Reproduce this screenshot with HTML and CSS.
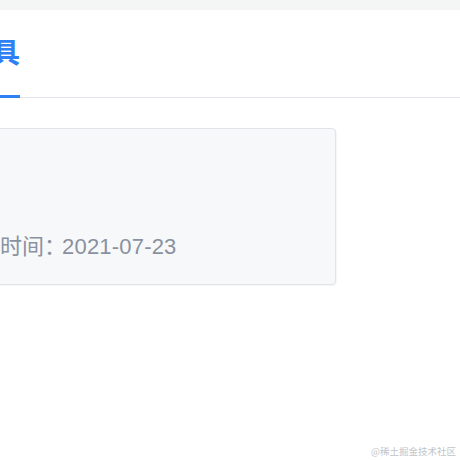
FILE: index.html
```html
<!DOCTYPE html>
<html lang="zh-CN">
<head>
<meta charset="utf-8">
<link rel="stylesheet" href="styles.css">
</head>
<body>
<div class="page">
  <div class="topbar"></div>
  <div class="tabs">
    <div class="tab active">具</div>
  </div>
  <div class="card">
    <div class="row">
      <span class="label">时间：</span><span class="date">2021-07-23</span>
    </div>
  </div>
  <div class="watermark">@稀土掘金技术社区</div>
</div>
</body>
</html>
```
FILE: styles.css
```css
html, body {
  margin: 0;
  padding: 0;
  background: #ffffff;
}
.page {
  position: relative;
  width: 460px;
  height: 460px;
  overflow: hidden;
  font-family: "Liberation Sans", "Noto Sans CJK SC", sans-serif;
}
.topbar {
  height: 10px;
  background: #f4f5f5;
}
.tabs {
  display: flex;
  padding: 27px 0 0 0;
  border-bottom: 1px solid #e4e6eb;
}
.tab {
  position: relative;
  margin-left: -8px;
  padding-bottom: 32px;
  font-family: "Noto Sans CJK SC", sans-serif;
  font-size: 28px;
  line-height: 28px;
  font-weight: 700;
  color: #2f7ff5;
}
.tab.active::after {
  content: "";
  position: absolute;
  left: 0;
  right: 0;
  bottom: -1px;
  height: 3px;
  background: #2f7ff5;
}
.card {
  margin: 30px 0 0 -40px;
  width: 376px;
  height: 157px;
  box-sizing: border-box;
  border: 1px solid #e1e3e8;
  border-radius: 4px;
  background: #f7f8fa;
  box-shadow: 1px 1px 0 rgba(0, 0, 0, 0.03);
  padding: 100px 0 0 39px;
}
.row {
  display: flex;
  align-items: baseline;
  height: 30px;
  line-height: 30px;
  font-size: 22px;
  color: #8a919f;
}
.label {
  font-family: "Noto Sans CJK SC", sans-serif;
}
.date {
  margin-left: -4px;
  letter-spacing: 0.2px;
}
.watermark {
  position: absolute;
  right: 4px;
  bottom: 3px;
  font-family: "Noto Sans CJK SC", sans-serif;
  font-size: 9.5px;
  line-height: 12px;
  color: #c2c4c7;
}
```
